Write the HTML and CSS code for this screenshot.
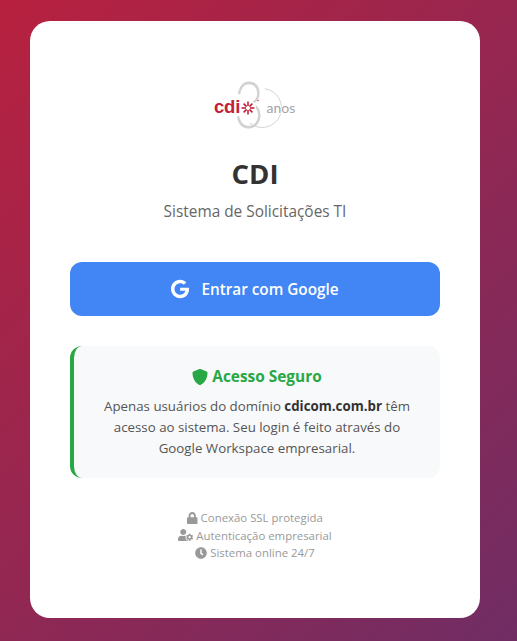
FILE: index.html
```html
<!DOCTYPE html>
<html lang="pt-BR">
<head>
  <meta charset="UTF-8" />
  <meta name="viewport" content="width=device-width, initial-scale=1.0" />
  <title>CDI - Sistema de Solicitações TI</title>
  <link rel="stylesheet" href="styles.css">
</head>
<body>
  <div class="login-card">
    <!-- Logo -->
    <svg class="logo" viewBox="0 0 100 80" aria-label="CDI 30 anos">
      <path class="logo-zero" d="M60 27.7A19.5 19.5 0 1 1 44.5 61.9" />
      <text class="logo-three" transform="translate(29 67) scale(0.78 1)">3</text>
      <circle class="logo-mask" cx="43" cy="47" r="8" />
      <text class="logo-cdi" x="9" y="52">cdi</text>
      <g class="logo-star">
        <line x1="43" y1="40.5" x2="43" y2="45" />
        <line x1="43" y1="49" x2="43" y2="53.5" />
        <line x1="36.5" y1="47" x2="41" y2="47" />
        <line x1="45" y1="47" x2="49.5" y2="47" />
        <line x1="38.6" y1="42.6" x2="41.6" y2="45.6" />
        <line x1="44.4" y1="48.4" x2="47.4" y2="51.4" />
        <line x1="47.4" y1="42.6" x2="44.4" y2="45.6" />
        <line x1="41.6" y1="48.4" x2="38.6" y2="51.4" />
      </g>
      <circle class="logo-dot" cx="53" cy="39.5" r="0.7" />
      <text class="logo-anos" x="61.5" y="52">anos</text>
    </svg>

    <h1>CDI</h1>
    <p class="subtitle">Sistema de Solicitações TI</p>

    <a class="google-btn" href="#">
      <svg class="google-icon" viewBox="0 0 488 512"><path d="M488 261.8C488 403.3 391.1 504 248 504 110.8 504 0 393.2 0 256S110.8 8 248 8c66.8 0 123 24.5 166.3 64.9l-67.5 64.9C258.5 52.6 94.3 116.6 94.3 256c0 86.5 69.1 156.6 153.7 156.6 98.2 0 135-70.4 140.8-106.9H248v-85.3h236.1c2.3 12.7 3.9 24.9 3.9 41.4z"/></svg>
      Entrar com Google
    </a>

    <div class="info-box">
      <h3>
        <svg class="shield-icon" viewBox="0 0 512 512"><path d="M466.5 83.7l-192-80a48.15 48.15 0 0 0-36.9 0l-192 80C27.7 91.1 16 108.6 16 128c0 198.5 114.5 335.7 221.5 380.3 11.8 4.9 25.1 4.9 36.9 0C360.1 472.6 496 349.3 496 128c0-19.4-11.7-36.9-29.5-44.3z"/></svg>
        Acesso Seguro
      </h3>
      <p>Apenas usuários do domínio <strong>cdicom.com.br</strong> têm acesso ao sistema. Seu login é feito através do Google Workspace empresarial.</p>
    </div>

    <div class="footer-info">
      <div class="footer-row">
        <svg class="lock-icon" viewBox="0 0 448 512"><path d="M400 224h-24v-72C376 68.2 307.8 0 224 0S72 68.2 72 152v72H48c-26.5 0-48 21.5-48 48v192c0 26.5 21.5 48 48 48h352c26.5 0 48-21.5 48-48V272c0-26.5-21.5-48-48-48zm-104 0H152v-72c0-39.7 32.3-72 72-72s72 32.3 72 72v72z"/></svg>
        Conexão SSL protegida
      </div>
      <div class="footer-row">
        <svg class="user-icon" viewBox="0 0 640 512"><path d="M610.5 373.3c2.6-14.1 2.6-28.5 0-42.6l25.8-14.9c3-1.7 4.3-5.2 3.3-8.5-6.7-21.6-18.2-41.2-33.2-57.4-2.3-2.5-6-3.1-9-1.4l-25.8 14.9c-10.9-9.3-23.4-16.5-36.9-21.3v-29.8c0-3.4-2.4-6.4-5.7-7.1-22.3-5-45-4.8-66.2 0-3.3.7-5.7 3.7-5.7 7.1v29.8c-13.5 4.8-26 12-36.9 21.3l-25.8-14.9c-2.9-1.7-6.7-1.1-9 1.4-15 16.2-26.5 35.8-33.2 57.4-1 3.3.4 6.8 3.3 8.5l25.8 14.9c-2.6 14.1-2.6 28.5 0 42.6l-25.8 14.9c-3 1.7-4.3 5.2-3.3 8.5 6.7 21.6 18.2 41.1 33.2 57.4 2.3 2.5 6 3.1 9 1.4l25.8-14.9c10.9 9.3 23.4 16.5 36.9 21.3v29.8c0 3.4 2.4 6.4 5.7 7.1 22.3 5 45 4.8 66.2 0 3.3-.7 5.7-3.7 5.7-7.1v-29.8c13.5-4.8 26-12 36.9-21.3l25.8 14.9c2.9 1.7 6.7 1.1 9-1.4 15-16.2 26.5-35.8 33.2-57.4 1-3.3-.4-6.8-3.3-8.5l-25.8-14.9zM496 400.5c-26.8 0-48.5-21.8-48.5-48.5s21.8-48.5 48.5-48.5 48.5 21.8 48.5 48.5-21.7 48.5-48.5 48.5zM224 256c70.7 0 128-57.3 128-128S294.7 0 224 0 96 57.3 96 128s57.3 128 128 128zm201.2 226.5c-2.3-1.2-4.6-2.6-6.8-3.9l-7.9 4.6c-6 3.4-12.8 5.3-19.6 5.3-10.9 0-21.4-4.6-28.9-12.6-18.3-19.8-32.3-43.9-40.2-69.6-5.5-17.7 1.9-36.4 17.9-45.7l7.9-4.6c-.1-2.6-.1-5.2 0-7.8l-7.9-4.6c-16-9.2-23.4-28-17.9-45.7.9-2.9 2.2-5.8 3.2-8.7-3.8-.3-7.5-1.2-11.4-1.2h-16.7c-22.2 10.2-46.9 16-72.9 16s-50.6-5.8-72.9-16h-16.7C60.2 288 0 348.2 0 422.4V464c0 26.5 21.5 48 48 48h352c10.1 0 19.5-3.2 27.2-8.5-1.2-3.8-2-7.7-2-11.8v-9.2z"/></svg>
        Autenticação empresarial
      </div>
      <div class="footer-row">
        <svg class="clock-icon" viewBox="0 0 512 512"><path d="M256,8C119,8,8,119,8,256S119,504,256,504,504,393,504,256,393,8,256,8Zm92.49,313h0l-20,25a16,16,0,0,1-22.49,2.5h0l-67-49.72a40,40,0,0,1-15-31.23V112a16,16,0,0,1,16-16h32a16,16,0,0,1,16,16V256l58,42.5A16,16,0,0,1,348.49,321Z"/></svg>
        Sistema online 24/7
      </div>
    </div>
  </div>
</body>
</html>
```

FILE: styles.css
```css
* {
  box-sizing: border-box;
}
body {
  font-family: 'Open Sans', 'Noto Sans', sans-serif;
  background: linear-gradient(135deg, #b8213f 0%, #702d64 100%);
  color: #333;
  margin: 0;
  height: 641px;
  padding: 21px 0 0 30px;
  overflow: hidden;
}
.login-card {
  width: 450px;
  height: 597px;
  padding: 40px;
  background: #fff;
  border-radius: 20px;
  text-align: center;
}
.logo {
  display: block;
  width: 100px;
  height: 80px;
  margin: 0 auto 14px;
}
.logo-three {
  font-family: 'Lato', sans-serif;
  font-weight: 300;
  font-size: 66px;
  fill: #d2d2d4;
}
.logo-zero {
  fill: none;
  stroke: #d4d4d6;
  stroke-width: 1;
}
.logo-mask {
  fill: #fff;
}
.logo-cdi {
  font-family: 'Liberation Sans', sans-serif;
  font-weight: bold;
  font-size: 18.5px;
  letter-spacing: -0.2px;
  fill: #c4203a;
}
.logo-star line {
  stroke: #c4203a;
  stroke-width: 1.6;
}
.logo-dot {
  fill: #c4203a;
}
.logo-anos {
  font-family: 'Lato', sans-serif;
  font-weight: 400;
  font-size: 14px;
  fill: #a4a4a6;
  paint-order: stroke;
  stroke: #fff;
  stroke-width: 2px;
}
h1 {
  margin: 0 0 8px;
  font-size: 27.5px;
  line-height: 37px;
  font-weight: 700;
  color: #333;
}
.subtitle {
  margin: 0 0 38px;
  font-size: 15.4px;
  line-height: 24px;
  color: #666;
}
.google-btn {
  display: flex;
  align-items: center;
  justify-content: center;
  gap: 12px;
  height: 54px;
  background: #4285f4;
  color: #fff;
  border-radius: 12px;
  font-size: 15.3px;
  font-weight: 600;
  text-decoration: none;
}
.google-icon {
  width: 18px;
  height: 20px;
  fill: #fff;
}
.info-box {
  margin-top: 30px;
  height: 132px;
  padding: 20px;
  background: #f8f9fa;
  border-left: 4px solid #28a745;
  border-radius: 12px;
}
.info-box h3 {
  display: flex;
  align-items: center;
  justify-content: center;
  gap: 4px;
  margin: 0 0 8px;
  font-size: 15.4px;
  line-height: 22px;
  font-weight: 700;
  color: #28a745;
}
.shield-icon {
  width: 16px;
  height: 16px;
  fill: #28a745;
}
.info-box p {
  margin: 0;
  font-size: 13.3px;
  line-height: 21px;
  color: #555;
}
.info-box strong {
  color: #333;
}
.footer-info {
  margin-top: 31px;
  font-size: 11.4px;
  line-height: 17.6px;
  color: #999;
}
.footer-row svg {
  height: 12px;
  fill: #999;
  vertical-align: -1.5px;
}
.lock-icon {
  width: 10.5px;
}
.user-icon {
  width: 15px;
}
.clock-icon {
  width: 12px;
}
```
